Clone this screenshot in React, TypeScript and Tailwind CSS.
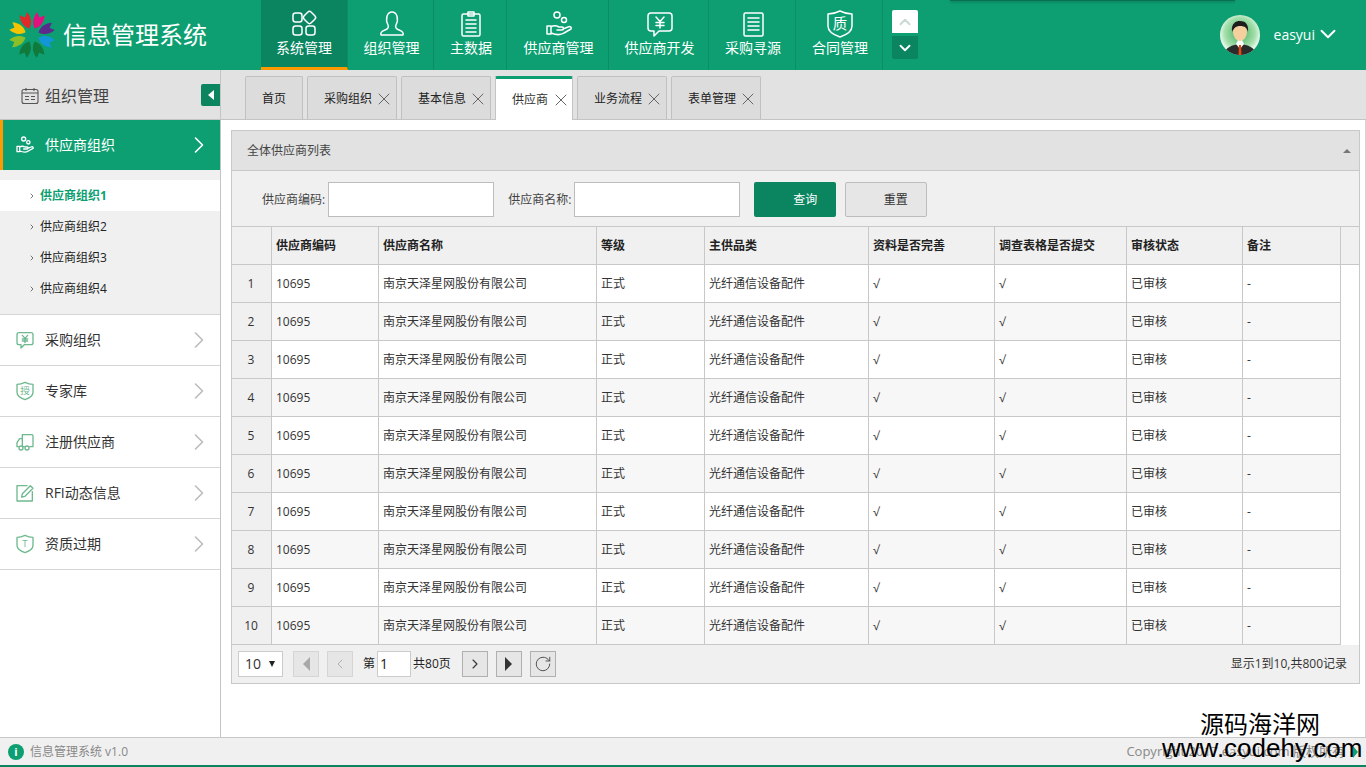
import { ChevronDown, ChevronLeft, ChevronRight, ChevronUp, RotateCw, X } from "lucide-react";
import type { ReactNode } from "react";

const font = "font-['Open_Sans','Noto_Sans_CJK_SC',sans-serif]";

function Ico({ size = 30, color = "#fff", children }: { size?: number; color?: string; children: ReactNode }) {
  return (
    <svg width={size} height={size} viewBox="0 0 30 30" fill="none" stroke={color} strokeWidth={size < 30 ? 2 : 1.5} strokeLinecap="round" strokeLinejoin="round">
      {children}
    </svg>
  );
}

function Logo() {
  const petals = ["#e02a2a", "#e0117f", "#5b2a8c", "#1296d8", "#0f7a3c", "#0f7a3c", "#8cbf26", "#f5c400"];
  return (
    <svg width="48" height="48" viewBox="-24 -24 48 48">
      {petals.map((c, i) => (
        <path key={i} d="M0 -7 C-5 -11 -6 -17 -4 -23 L0 -19 L4 -23 C6 -17 5 -11 0 -7 Z" fill={c} transform={`rotate(${i * 45 - 22})`} />
      ))}
    </svg>
  );
}

function Avatar() {
  return (
    <svg width="40" height="40" viewBox="0 0 40 40">
      <defs>
        <radialGradient id="av" cx="50%" cy="45%" r="55%">
          <stop offset="0%" stopColor="#3fae5a" />
          <stop offset="70%" stopColor="#a6e0ae" />
          <stop offset="100%" stopColor="#ffffff" />
        </radialGradient>
        <clipPath id="avc">
          <circle cx="20" cy="20" r="20" />
        </clipPath>
      </defs>
      <g clipPath="url(#avc)">
        <rect width="40" height="40" fill="url(#av)" />
        <path d="M4 40 C5 32 12 30 20 29 C28 30 35 32 36 40 Z" fill="#2b2b2b" />
        <path d="M16 29 L20 34 L24 29 L22 25 L18 25 Z" fill="#fff" />
        <path d="M19 30 L21 30 L21.5 40 L18.5 40 Z" fill="#e8490f" />
        <ellipse cx="20" cy="17" rx="7" ry="9" fill="#f6cf9f" />
        <path d="M12 17 C11 8 16 6 20 6 C25 6 29 9 28 17 C27 13 25 11 20 11 C16 11 14 13 12 17 Z" fill="#1d1d1d" />
      </g>
    </svg>
  );
}

const GridIcon = () => (
  <Ico>
    <rect x="4" y="4" width="9" height="9" rx="2.5" />
    <rect x="15.5" y="3.5" width="10" height="10" rx="2.5" transform="rotate(45 20.5 8.5)" />
    <rect x="4" y="17" width="9" height="9" rx="2.5" />
    <rect x="17" y="17" width="9" height="9" rx="2.5" />
  </Ico>
);
const UserIcon = () => (
  <Ico>
    <path d="M11 16 C8 10 10 3 15 3 C20 3 22 10 19 16 C18 18 19 20 22 21 C25 22 27 24 26 26 L4 26 C3 24 5 22 8 21 C11 20 12 18 11 16 Z" />
  </Ico>
);
const ListIcon = () => (
  <Ico>
    <rect x="6" y="5" width="18" height="22" rx="1.5" />
    <path d="M12 3 H18 V7 H12 Z M10 11 H20 M10 15 H20 M10 19 H20 M10 23 H20" />
  </Ico>
);
const HandIcon = ({ size = 30, color = "#fff" }: { size?: number; color?: string }) => (
  <Ico size={size} color={color}>
    <circle cx="13" cy="6" r="3" />
    <circle cx="20" cy="11" r="2.5" />
    <path d="M3 17 H7 V25 H3 Z M7 18 C10 16 13 17 15 18 H18 C20 18 20 21 18 21 H13 M7 24 C12 26 17 26 20 24 L27 20 C28 18 26 17 24 18 L19 20" />
  </Ico>
);
const YenIcon = ({ size = 30, color = "#fff" }: { size?: number; color?: string }) => (
  <Ico size={size} color={color}>
    <path d="M6 4 H24 C26 4 27 5 27 7 V19 C27 21 26 22 24 22 H14 L9 27 V22 H6 C4 22 3 21 3 19 V7 C3 5 4 4 6 4 Z" />
    <path d="M11 8 L15 12.5 L19 8 M15 12.5 V19 M11 13.5 H19 M11 16.5 H19" />
  </Ico>
);
const ClipIcon = () => (
  <Ico>
    <rect x="6" y="4" width="19" height="23" rx="1.5" />
    <path d="M10 9 H21 M10 13 H21 M10 17 H21 M10 21 H21" />
  </Ico>
);
const ShieldIcon = ({ size = 30, color = "#fff", ch = "质" }: { size?: number; color?: string; ch?: string }) => (
  <div className="relative flex items-center justify-center">
    <Ico size={size} color={color}>
      <path d="M15 2 C19 4 23 5 27 5 V17 C27 22 21 26 15 28 C9 26 3 22 3 17 V5 C7 5 11 4 15 2 Z" />
    </Ico>
    <span className="absolute leading-none" style={{ color, fontSize: size * 0.48 }}>{ch}</span>
  </div>
);
const CalendarIcon = () => (
  <svg width="18" height="18" viewBox="0 0 18 18" fill="none" stroke="#555" strokeWidth="1.1">
    <rect x="1" y="2.5" width="16" height="14" rx="2" />
    <path d="M5 1 V4 M13 1 V4 M1 6 H17 M4 9.5 H8 M10 9.5 H14 M4 12.5 H8 M10 12.5 H14" />
  </svg>
);
const TruckIcon = () => (
  <Ico size={20} color="#6fb98f">
    <path d="M11 4 H25 C26 4 27 5 27 6 V22 H22 M14 22 H11 V4 M11 10 H7 L3 16 V22 H5" />
    <circle cx="9" cy="24" r="3" />
    <circle cx="18" cy="24" r="3" />
  </Ico>
);
const EditIcon = () => (
  <Ico size={20} color="#6fb98f">
    <path d="M26 13 V27 H3 V4 H18" />
    <path d="M10 21 L11 16 L23 4 L27 8 L15 20 Z" />
  </Ico>
);

const navItems = [
  { label: "系统管理", icon: <GridIcon />, w: "w-[87px]", active: true },
  { label: "组织管理", icon: <UserIcon />, w: "w-[86px]" },
  { label: "主数据", icon: <ListIcon />, w: "w-[73px]" },
  { label: "供应商管理", icon: <HandIcon />, w: "w-[102px]" },
  { label: "供应商开发", icon: <YenIcon />, w: "w-[100px]" },
  { label: "采购寻源", icon: <ClipIcon />, w: "w-[87px]" },
  { label: "合同管理", icon: <ShieldIcon />, w: "w-[87px]" },
];

const tabs = [
  { label: "首页", w: "w-[58px]" },
  { label: "采购组织", w: "w-[90px]", close: true },
  { label: "基本信息", w: "w-[90px]", close: true },
  { label: "供应商", w: "w-[78px]", close: true, active: true },
  { label: "业务流程", w: "w-[90px]", close: true },
  { label: "表单管理", w: "w-[90px]", close: true },
];

const sideItems = [
  { label: "采购组织", icon: <YenIcon size={20} color="#6fb98f" /> },
  { label: "专家库", icon: <ShieldIcon size={20} color="#6fb98f" ch="授" /> },
  { label: "注册供应商", icon: <TruckIcon /> },
  { label: "RFI动态信息", icon: <EditIcon /> },
  { label: "资质过期", icon: <ShieldIcon size={20} color="#6fb98f" ch="T" /> },
];

const cols = ["供应商编码", "供应商名称", "等级", "主供品类", "资料是否完善", "调查表格是否提交", "审核状态", "备注"];
const row = ["10695", "南京天泽星网股份有限公司", "正式", "光纤通信设备配件", "√", "√", "已审核", "-"];
const gridCols = "grid grid-cols-[40px_107px_218px_108px_164px_126px_132px_116px_98px]";

function PageBtn({ children, off }: { children: ReactNode; off?: boolean }) {
  return (
    <div className={off ? "w-[26px] h-[26px] flex items-center justify-center border border-[#d5d5d5] bg-[#e6e6e6]" : "w-[26px] h-[26px] flex items-center justify-center border border-[#b0b0b0] bg-[#e6e6e6]"}>
      {children}
    </div>
  );
}

export default function App() {
  return (
    <div className={`${font} relative w-[1366px] h-[767px] overflow-hidden flex flex-col bg-white text-xs text-[#222]`}>
      {/* top bar */}
      <header className="relative h-[70px] shrink-0 flex bg-[#0d9f72] text-white">
        <div className="w-[261px] flex items-center pl-2 gap-[7px]">
          <Logo />
          <span className="text-2xl leading-none">信息管理系统</span>
        </div>
        <nav className="flex">
          {navItems.map((n) => (
            <div
              key={n.label}
              className={
                n.active
                  ? `${n.w} flex flex-col items-center pt-[9px] border-b-[3px] border-[#f90] border-r border-r-[#0b8d65] bg-[#0a8560]`
                  : `${n.w} flex flex-col items-center pt-[9px] pl-[2px] border-r border-[#0b8d65]`
              }
            >
              {n.icon}
              <span className="text-sm leading-5 -mt-px whitespace-nowrap">{n.label}</span>
            </div>
          ))}
        </nav>
        <div className="ml-[9px] mt-[10px] flex flex-col w-[26px] gap-[3px]">
          <div className="h-[23px] bg-white rounded-t-[2px] flex items-center justify-center">
            <ChevronUp size={18} color="#c9d9d3" strokeWidth={2.5} />
          </div>
          <div className="h-[23px] bg-[#0a8560] rounded-b-[2px] flex items-center justify-center">
            <ChevronDown size={18} color="#fff" strokeWidth={2.5} />
          </div>
        </div>
        <div className="absolute left-[950px] top-0 w-[285px] h-px bg-[#0a6e50] shadow-[0_1px_3px_rgba(0,0,0,0.4)]" />
        <div className="ml-auto flex items-center pr-[25px]">
          <Avatar />
          <span className="ml-[14px] text-sm">easyui</span>
          <ChevronDown size={26} className="-mt-[2px]" strokeWidth={1.8} />
        </div>
      </header>

      <div className="flex-1 flex min-h-0">
        {/* sidebar */}
        <aside className="w-[221px] shrink-0 border-r border-[#c4c4c4] flex flex-col">
          <div className="h-[50px] shrink-0 flex items-center bg-[#e2e2e2] border-b border-[#c4c4c4] pl-[21px] pt-[2px] relative">
            <CalendarIcon />
            <span className="ml-[6px] text-base text-[#444]">组织管理</span>
            <div className="absolute right-0 top-[14px] w-[19px] h-[22px] bg-[#0a8560] rounded-l-[2px] flex items-center justify-center">
              <div className="w-0 h-0 border-y-[5px] border-y-transparent border-r-[6px] border-r-white" />
            </div>
          </div>
          <div className="h-[50px] shrink-0 flex items-center bg-[#0d9f72] border-l-[3px] border-[#f90] text-white pl-[12px] pr-[7px]">
            <HandIcon size={20} />
            <span className="ml-[10px] text-sm">供应商组织</span>
            <ChevronRight size={28} className="ml-auto" strokeWidth={1.4} />
          </div>
          <div className="h-[145px] shrink-0 bg-[#f0f0f0] pt-[10px] border-b border-[#d5d5d5]">
            {["供应商组织1", "供应商组织2", "供应商组织3", "供应商组织4"].map((s, i) => (
              <div key={s} className={i === 0 ? "h-[31px] flex items-center pl-[28px] bg-white text-[#0d9f72] font-bold" : "h-[31px] flex items-center pl-[28px]"}>
                <ChevronRight size={8} color="#333" className="mr-[4px]" strokeWidth={2} />
                {s}
              </div>
            ))}
          </div>
          {sideItems.map((s) => (
            <div key={s.label} className="h-[51px] shrink-0 flex items-center border-b border-[#d5d5d5] pl-[15px] pr-[7px]">
              <div className="w-[20px] flex justify-center">{s.icon}</div>
              <span className="ml-[10px] text-sm text-[#333]">{s.label}</span>
              <ChevronRight size={28} color="#bcbcbc" className="ml-auto" strokeWidth={1.4} />
            </div>
          ))}
        </aside>

        {/* main */}
        <main className="flex-1 min-w-0 flex flex-col">
          <div className="h-[50px] shrink-0 bg-[#e2e2e2] border-b border-[#c4c4c4] flex items-end gap-[4px] pl-[24px]">
            {tabs.map((t) => (
              <div
                key={t.label}
                className={
                  t.active
                    ? `${t.w} h-[44px] -mb-px flex items-center gap-[3px] bg-white border-x border-[#c4c4c4] border-t-[3px] border-t-[#0d9f72] rounded-t-[2px] pl-[16px] text-[#333]`
                    : `${t.w} h-[43px] flex items-center gap-[2px] bg-[#dcdcdc] border border-b-0 border-[#c0c0c0] rounded-t-[2px] pl-[16px] pt-[2px]`
                }
              >
                <span>{t.label}</span>
                {t.close && <X size={20} color="#666" strokeWidth={1.2} className="shrink-0" />}
              </div>
            ))}
          </div>

          <div className="flex-1 pl-[10px] pr-[5px] pt-[10px] border-r border-[#d5d5d5]">
            <div className="border border-[#c8c8c8] bg-[#f0f0f0]">
              <div className="h-[40px] bg-[#e2e2e2] border-b border-[#c8c8c8] flex items-center pl-[15px] pr-[8px] text-[#444]">
                全体供应商列表
                <div className="ml-auto w-0 h-0 border-x-[4px] border-x-transparent border-b-[4px] border-b-[#777]" />
              </div>
              <div className="h-[56px] border-b border-[#c8c8c8] flex items-center pl-[30px] pt-[2px] text-[#444]">
                <span>供应商编码:</span>
                <div className="ml-[3px] w-[166px] h-[35px] bg-white border border-[#bdbdbd]" />
                <span className="ml-[14px]">供应商名称:</span>
                <div className="ml-[3px] w-[166px] h-[35px] bg-white border border-[#bdbdbd]" />
                <button className="ml-[14px] w-[82px] h-[35px] bg-[#0a8560] text-white rounded-[2px] pl-[20px]">查询</button>
                <button className="ml-[9px] w-[82px] h-[35px] bg-[#e6e6e6] border border-[#bdbdbd] rounded-[2px] pl-[19px] text-[#333]">重置</button>
              </div>

              {/* table */}
              <div className="flex bg-white">
                <div>
                  <div className={`${gridCols} h-[38px] bg-[#f0f0f0] font-bold text-[#222]`}>
                    <div className="border-r border-b border-[#c8c8c8]" />
                    {cols.map((c) => (
                      <div key={c} className="border-r border-b border-[#c8c8c8] flex items-center pl-[4px]">{c}</div>
                    ))}
                  </div>
                  {Array.from({ length: 10 }, (_, i) => (
                    <div key={i} className={i % 2 ? `${gridCols} h-[38px] bg-[#f7f7f7]` : `${gridCols} h-[38px] bg-white`}>
                      <div className="bg-[#f0f0f0] border-r border-b border-[#c8c8c8] flex items-center justify-center pr-px text-[#333]">{i + 1}</div>
                      {row.map((c, j) => (
                        <div key={j} className="border-r border-b border-[#c8c8c8] flex items-center pl-[4px] text-[#333]">{c}</div>
                      ))}
                    </div>
                  ))}
                </div>
                <div className="flex-1 h-[38px] bg-[#f0f0f0] border-b border-[#c8c8c8]" />
              </div>

              {/* pager */}
              <div className="h-[38px] flex items-center pl-[6px] pr-[12px]">
                <div className="w-[45px] h-[26px] bg-white border border-[#ccc] flex items-center pl-[6px] text-sm text-[#333]">
                  10
                  <div className="ml-[8px] w-0 h-0 border-x-[3.5px] border-x-transparent border-t-[6px] border-t-[#222]" />
                </div>
                <div className="ml-[10px] flex gap-[8px]">
                  <PageBtn off><div className="w-0 h-0 border-y-[7px] border-y-transparent border-r-[7px] border-r-[#a8a8a8]" /></PageBtn>
                  <PageBtn off><ChevronLeft size={16} color="#aaa" strokeWidth={1.4} /></PageBtn>
                </div>
                <span className="ml-[10px]">第</span>
                <div className="ml-[2px] w-[34px] h-[26px] bg-white border border-[#ccc] flex items-center pl-[2px] text-sm">1</div>
                <span className="ml-[2px]">共80页</span>
                <div className="ml-[11px] flex gap-[8px]">
                  <PageBtn><ChevronRight size={16} color="#333" strokeWidth={1.6} /></PageBtn>
                  <PageBtn><div className="w-0 h-0 border-y-[7px] border-y-transparent border-l-[7px] border-l-[#333]" /></PageBtn>
                  <PageBtn><RotateCw size={18} color="#444" strokeWidth={1.2} /></PageBtn>
                </div>
                <span className="ml-auto text-[#333]">显示1到10,共800记录</span>
              </div>
            </div>
          </div>
        </main>
      </div>

      {/* status bar */}
      <footer className="h-[30px] shrink-0 bg-[#f0f0f0] border-t border-[#c8c8c8] border-b-[2px] border-b-[#0a8560] flex items-center pl-[8px] pr-[8px] text-[#888]">
        <div className="w-4 h-4 rounded-full bg-[#0d9f72] flex items-center justify-center text-white font-bold text-[11px] leading-none">i</div>
        <span className="ml-[6px]">信息管理系统 v1.0</span>
        <span className="ml-auto text-[13px] whitespace-nowrap">Copyright 2017 easyui.com 版权所有</span>
        <div className="ml-[8px] w-0 h-0 border-y-[6px] border-y-transparent border-l-[5px] border-l-[#0d9f72]" />
      </footer>

      {/* watermark */}
      <div className="absolute left-[1162px] top-[709px] w-[200px] text-center text-black font-['Liberation_Sans','Noto_Sans_CJK_SC',sans-serif] pointer-events-none">
        <div className="text-2xl leading-[32px] pr-[4px]">源码海洋网</div>
        <div className="text-[26px] leading-[26px] -mt-[6px] whitespace-nowrap">www.codehy.com</div>
      </div>
    </div>
  );
}
